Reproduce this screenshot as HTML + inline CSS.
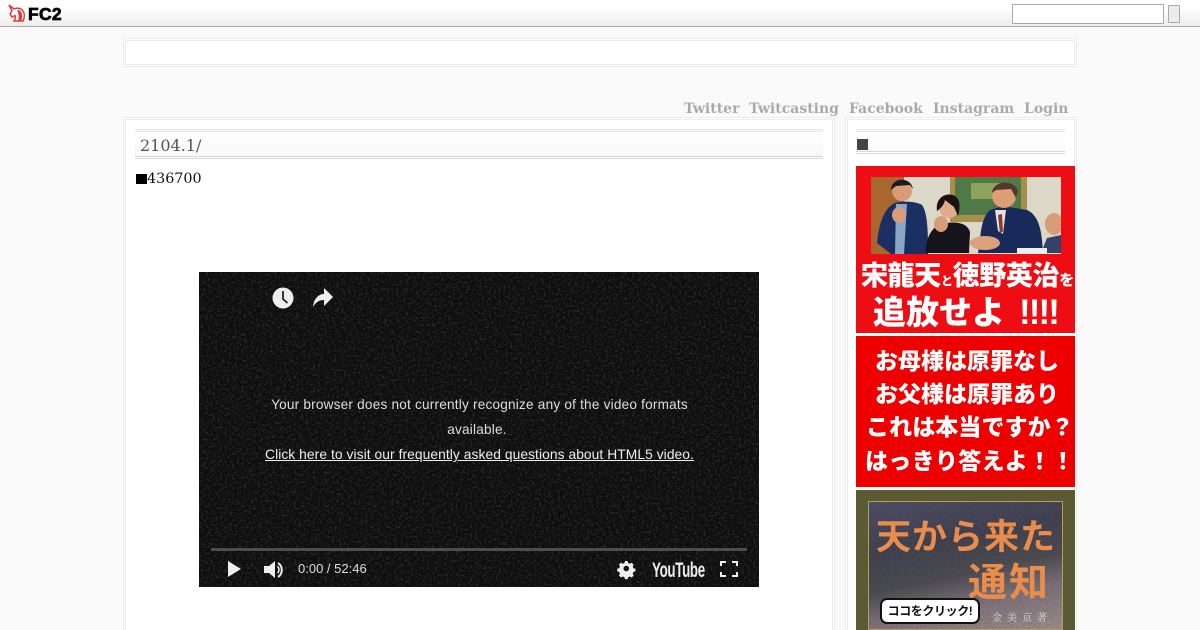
<!DOCTYPE html>
<html lang="ja"><head><meta charset="utf-8"><title>2104.1/</title>
<style>
html,body{margin:0;padding:0;background:#fafafa;width:1200px;height:630px;overflow:hidden}
div,span,a{position:absolute;box-sizing:border-box}
#w{left:0;top:0;width:1200px;height:630px;overflow:hidden;background:#fafafa}
.serif{font-family:"DejaVu Serif","Liberation Serif",serif}
.nav{top:100px;font:bold 14px/18px "DejaVu Serif",serif;color:#aaa;white-space:nowrap}
.jp{font-family:"Liberation Sans","Noto Sans CJK JP",sans-serif;font-weight:900;color:#fff;white-space:nowrap}
.vt{font:13.6px/25px "Liberation Sans",sans-serif;color:#ddd;white-space:nowrap;text-align:center}
</style></head><body>
<div id="w">

<div style="left:0;top:0;width:1200px;height:27px;background:linear-gradient(#fff,#fdfdfd 40%,#ececec);border-bottom:1px solid #aaa"></div>
<svg style="position:absolute;left:8px;top:4px" width="17" height="18" viewBox="0 0 17 18"><path d="M1 1l5 4c3-1.500 7-1 9 2 2 3 1.500 7 0 10H6c1-2 2-3 1-5.500L4 13 2 10l2-3.500z" fill="#fff" stroke="#e13a3d" stroke-width="1.500"/><path d="M9 6c3 0 5 2 5 5s0 4-1 6h-3c1-3 1-7-1-11z" fill="#e13a3d"/></svg>
<span style="left:28px;top:5px;font:900 17.500px/18px 'Liberation Sans',sans-serif;-webkit-text-stroke:.7px #000;color:#000;letter-spacing:.3px">FC2</span>
<div style="left:1012px;top:4px;width:152px;height:20px;background:#fff;border:1px solid #aaa"></div>
<div style="left:1168px;top:5px;width:12px;height:18px;background:#ececec;border:1px solid #aaa;border-radius:1px"></div>

<div style="left:123px;top:38px;width:954px;height:29px;background:#fff;border:3px double #ececec"></div>

<span class="nav" style="left:684px">Twitter</span>
<span class="nav" style="left:749px">Twitcasting</span>
<span class="nav" style="left:849px">Facebook</span>
<span class="nav" style="left:933px">Instagram</span>
<span class="nav" style="left:1024px">Login</span>

<div style="left:123px;top:117px;width:712px;height:513px;background:#fff;border:3px double #ececec;border-bottom:0"></div>
<div style="left:845px;top:117px;width:232px;height:513px;background:#fff;border:3px double #ececec;border-bottom:0"></div>

<div style="left:135px;top:129px;width:688px;height:30px;background:linear-gradient(#fff,#f8f8f8);border-top:3px double #e6e6e6;border-bottom:3px double #d8d8d8"></div>
<span class="serif" style="left:140px;top:136px;font-size:16px;line-height:20px;color:#555">2104.1/</span>
<div style="left:136px;top:174px;width:11px;height:10px;background:#000"></div>
<span class="serif" style="left:147px;top:170px;font-size:14.300px;line-height:18px;color:#111">436700</span>

<div style="left:199px;top:272px;width:560px;height:315px;background:#0e0e0e;overflow:hidden">
<svg width="560" height="315" style="position:absolute;left:0;top:0"><filter id="n" x="0" y="0" width="100%" height="100%"><feTurbulence type="fractalNoise" baseFrequency=".42" numOctaves="3" seed="4"/><feColorMatrix values="0 0 0 0 1 0 0 0 0 1 0 0 0 0 1 1.600 0 0 0 -.72"/></filter><rect width="560" height="315" filter="url(#n)" opacity=".2"/></svg>
<svg width="560" height="315" style="position:absolute;left:0;top:0">
<circle cx="84" cy="26" r="10.500" fill="#eee"/><path d="M84 19v8l4.500 4" fill="none" stroke="#222" stroke-width="1.800"/>
<path d="M114 35c1-9 6-13 11-13v-6l9 9-9 9v-6c-5 0-8 2-11 7z" fill="#eee"/>
<rect x="12" y="276" width="536" height="3" fill="#4e4e4e"/>
<path d="M29 289l13 8-13 8z" fill="#eee"/>
<path d="M65 294h5l6-5v17l-6-5h-5z" fill="#eee"/><path d="M79 291c5 3 5 11 0 14" fill="none" stroke="#eee" stroke-width="2"/><path d="M78.500 294.500c2 1.500 2 5 0 6.500" fill="none" stroke="#eee" stroke-width="1.500"/>
<path d="M426 289.500l-.5 2-1.800.7-1.800-1-2 2 1 1.800-.7 1.800-2 .5v2.600l2 .5.700 1.800-1 1.800 2 2 1.800-1 1.800.7.500 2h2.600l.5-2 1.800-.7 1.800 1 2-2-1-1.800.7-1.800 2-.5v-2.600l-2-.5-.7-1.800 1-1.800-2-2-1.800 1-1.800-.7-.5-2z" fill="#eee" transform="translate(0 -.500)"/><circle cx="427.300" cy="296.500" r="2.800" fill="#151515"/>
<path d="M522 294v-4h5M533 290h5v4M538 300v4h-5M527 304h-5v-4" fill="none" stroke="#eee" stroke-width="2"/>
</svg>
<span class="vt" style="left:72px;top:120px;width:417px;letter-spacing:.21px">Your browser does not currently recognize any of the video formats</span>
<span class="vt" style="left:72px;top:145px;width:412px;letter-spacing:.21px">available.</span>
<span class="vt" style="left:66px;top:170px;width:429px;color:#eee;text-decoration:underline;font-size:13.800px;letter-spacing:.07px">Click here to visit our frequently asked questions about HTML5 video.</span>
<span style="left:99px;top:289px;font:13px/16px 'Liberation Sans',sans-serif;color:#ddd;white-space:nowrap">0:00 / 52:46</span>
<span style="left:453px;top:285px;font:bold 21.500px/26px 'Liberation Sans',sans-serif;color:#eee;letter-spacing:-.5px;transform:scaleX(.62);transform-origin:0 0;white-space:nowrap">YouTube</span>
</div>

<div style="left:856px;top:129px;width:209px;height:25px;background:linear-gradient(#fff,#f9f9f9);border-top:3px double #e6e6e6;border-bottom:3px double #d8d8d8"></div>
<div style="left:857px;top:139px;width:11px;height:11px;background:#444"></div>

<div style="left:856px;top:166px;width:219px;height:167px;background:#ee0d12;overflow:hidden">
<svg width="190" height="77" style="position:absolute;left:15px;top:11px" viewBox="0 0 190 77">
<rect width="190" height="77" fill="#dcd8c8"/><rect x="0" width="33" height="77" fill="#a8672e"/>
<rect x="79" width="77" height="45" fill="#a88e4a"/><rect x="84" y="0" width="66" height="38" fill="#4f7a48"/><rect x="100" y="6" width="34" height="16" fill="#8ea35b"/>
<path d="M6 66C8 45 14 30 24 26c6-2 20-2 27 2 6 8 6 30 6 49H20z" fill="#1b2f63"/><path d="M25 27h11l-3 50H24z" fill="#89a6c6"/>
<circle cx="31" cy="14" r="10" fill="#d89c78"/><path d="M20 13c0-13 20-14 22-1l-3-4-14 1z" fill="#1b1b1e"/><ellipse cx="28" cy="38" rx="7" ry="8" fill="#d89c78"/>
<path d="M55 76c-1-14 6-27 16-29 12-3 25-2 28 8l-1 21z" fill="#15141b"/><circle cx="78" cy="31" r="10" fill="#e2ab8b"/><path d="M66 34c-2-15 11-19 18-15 6 4 5 13 3 20l-4-9-9-7c-1 5-4 8-8 11z" fill="#1a1212"/><ellipse cx="70" cy="47" rx="7" ry="8" fill="#d89c78"/>
<path d="M107 76c3-16 2-34 12-43l13-4 24 4c14 6 15 27 16 43z" fill="#182a5a"/><path d="M124 33h11l-3 24-5-3z" fill="#e6e3de"/><path d="M127 38l4-1 1 17-3 3z" fill="#8a3b33"/>
<circle cx="133" cy="19" r="12" fill="#dd9d75"/><path d="M121 16c1-13 22-14 26-2l-2 7-5-9-15 1z" fill="#51382a"/><ellipse cx="114" cy="66" rx="15" ry="7" fill="#dca17d"/>
<ellipse cx="183" cy="47" rx="9" ry="11" fill="#d89c78"/><path d="M170 76l6-15 14-3v18z" fill="#33426a"/><rect x="146" y="71" width="30" height="6" fill="#eee"/>
</svg>
<span class="jp" style="left:5px;top:92px;font-size:27px;line-height:36px;letter-spacing:-.35px">宋龍天<span style="position:static;font-size:12px">と</span>徳野英治<span style="position:static;font-size:15px">を</span></span>
<span class="jp" style="left:17px;top:125px;font-size:33px;line-height:44px">追放せよ<span style="position:absolute;left:146px;top:0;letter-spacing:-1.900px;font-size:35px;line-height:44px">!!!!</span></span>
</div>

<div style="left:856px;top:336px;width:219px;height:151px;background:#ee0000;overflow:hidden">
<span class="jp" style="left:19px;top:8px;font-size:23px;line-height:34px;letter-spacing:0">お母様は原罪なし</span>
<span class="jp" style="left:19px;top:41px;font-size:23px;line-height:34px;letter-spacing:0">お父様は原罪あり</span>
<span class="jp" style="left:10px;top:74px;font-size:23px;line-height:34px;letter-spacing:.1px">これは本当ですか？</span>
<span class="jp" style="left:9px;top:108px;font-size:23px;line-height:34px;letter-spacing:.3px">はっきり答えよ！！</span>
</div>

<div style="left:856px;top:490px;width:219px;height:140px;background:#5a5b33;overflow:hidden">
<div style="left:12px;top:11px;width:195px;height:129px;border:1px solid #b79d5c;background:linear-gradient(168deg,#484a66 0%,#3a3b4c 32%,#47474d 55%,#7d717c 72%,#a5938f 100%);overflow:hidden">
<svg width="193" height="127" style="position:absolute;left:0;top:0"><filter id="m" x="0" y="0" width="100%" height="100%"><feTurbulence type="fractalNoise" baseFrequency=".7" numOctaves="2" seed="9"/><feColorMatrix values="0 0 0 0 .1 0 0 0 0 .1 0 0 0 0 .1 1.800 0 0 0 -.6"/></filter><rect width="193" height="127" filter="url(#m)" opacity=".6"/></svg>
<span style="left:7px;top:12px;font:bold 35px/42px 'Noto Sans CJK JP',sans-serif;color:#ea8c4c;white-space:nowrap;letter-spacing:1px">天から来た</span>
<span style="left:99px;top:56px;font:bold 39px/44px 'Noto Sans CJK JP',sans-serif;color:#ea8c4c;white-space:nowrap;letter-spacing:2px">通知</span>
<span style="left:123px;top:108px;font:10px/14px 'Noto Serif CJK SC',serif;color:#ddd;white-space:nowrap;letter-spacing:5px">金美京著</span>
</div>
<div class="jp" style="left:24px;top:108px;width:100px;height:26px;background:#fff;border:2px solid #111;border-radius:7px;color:#111;font-size:12px;line-height:22px;text-align:center;font-weight:700;letter-spacing:-.4px">ココをクリック!</div>
</div>

</div>
</body></html>
